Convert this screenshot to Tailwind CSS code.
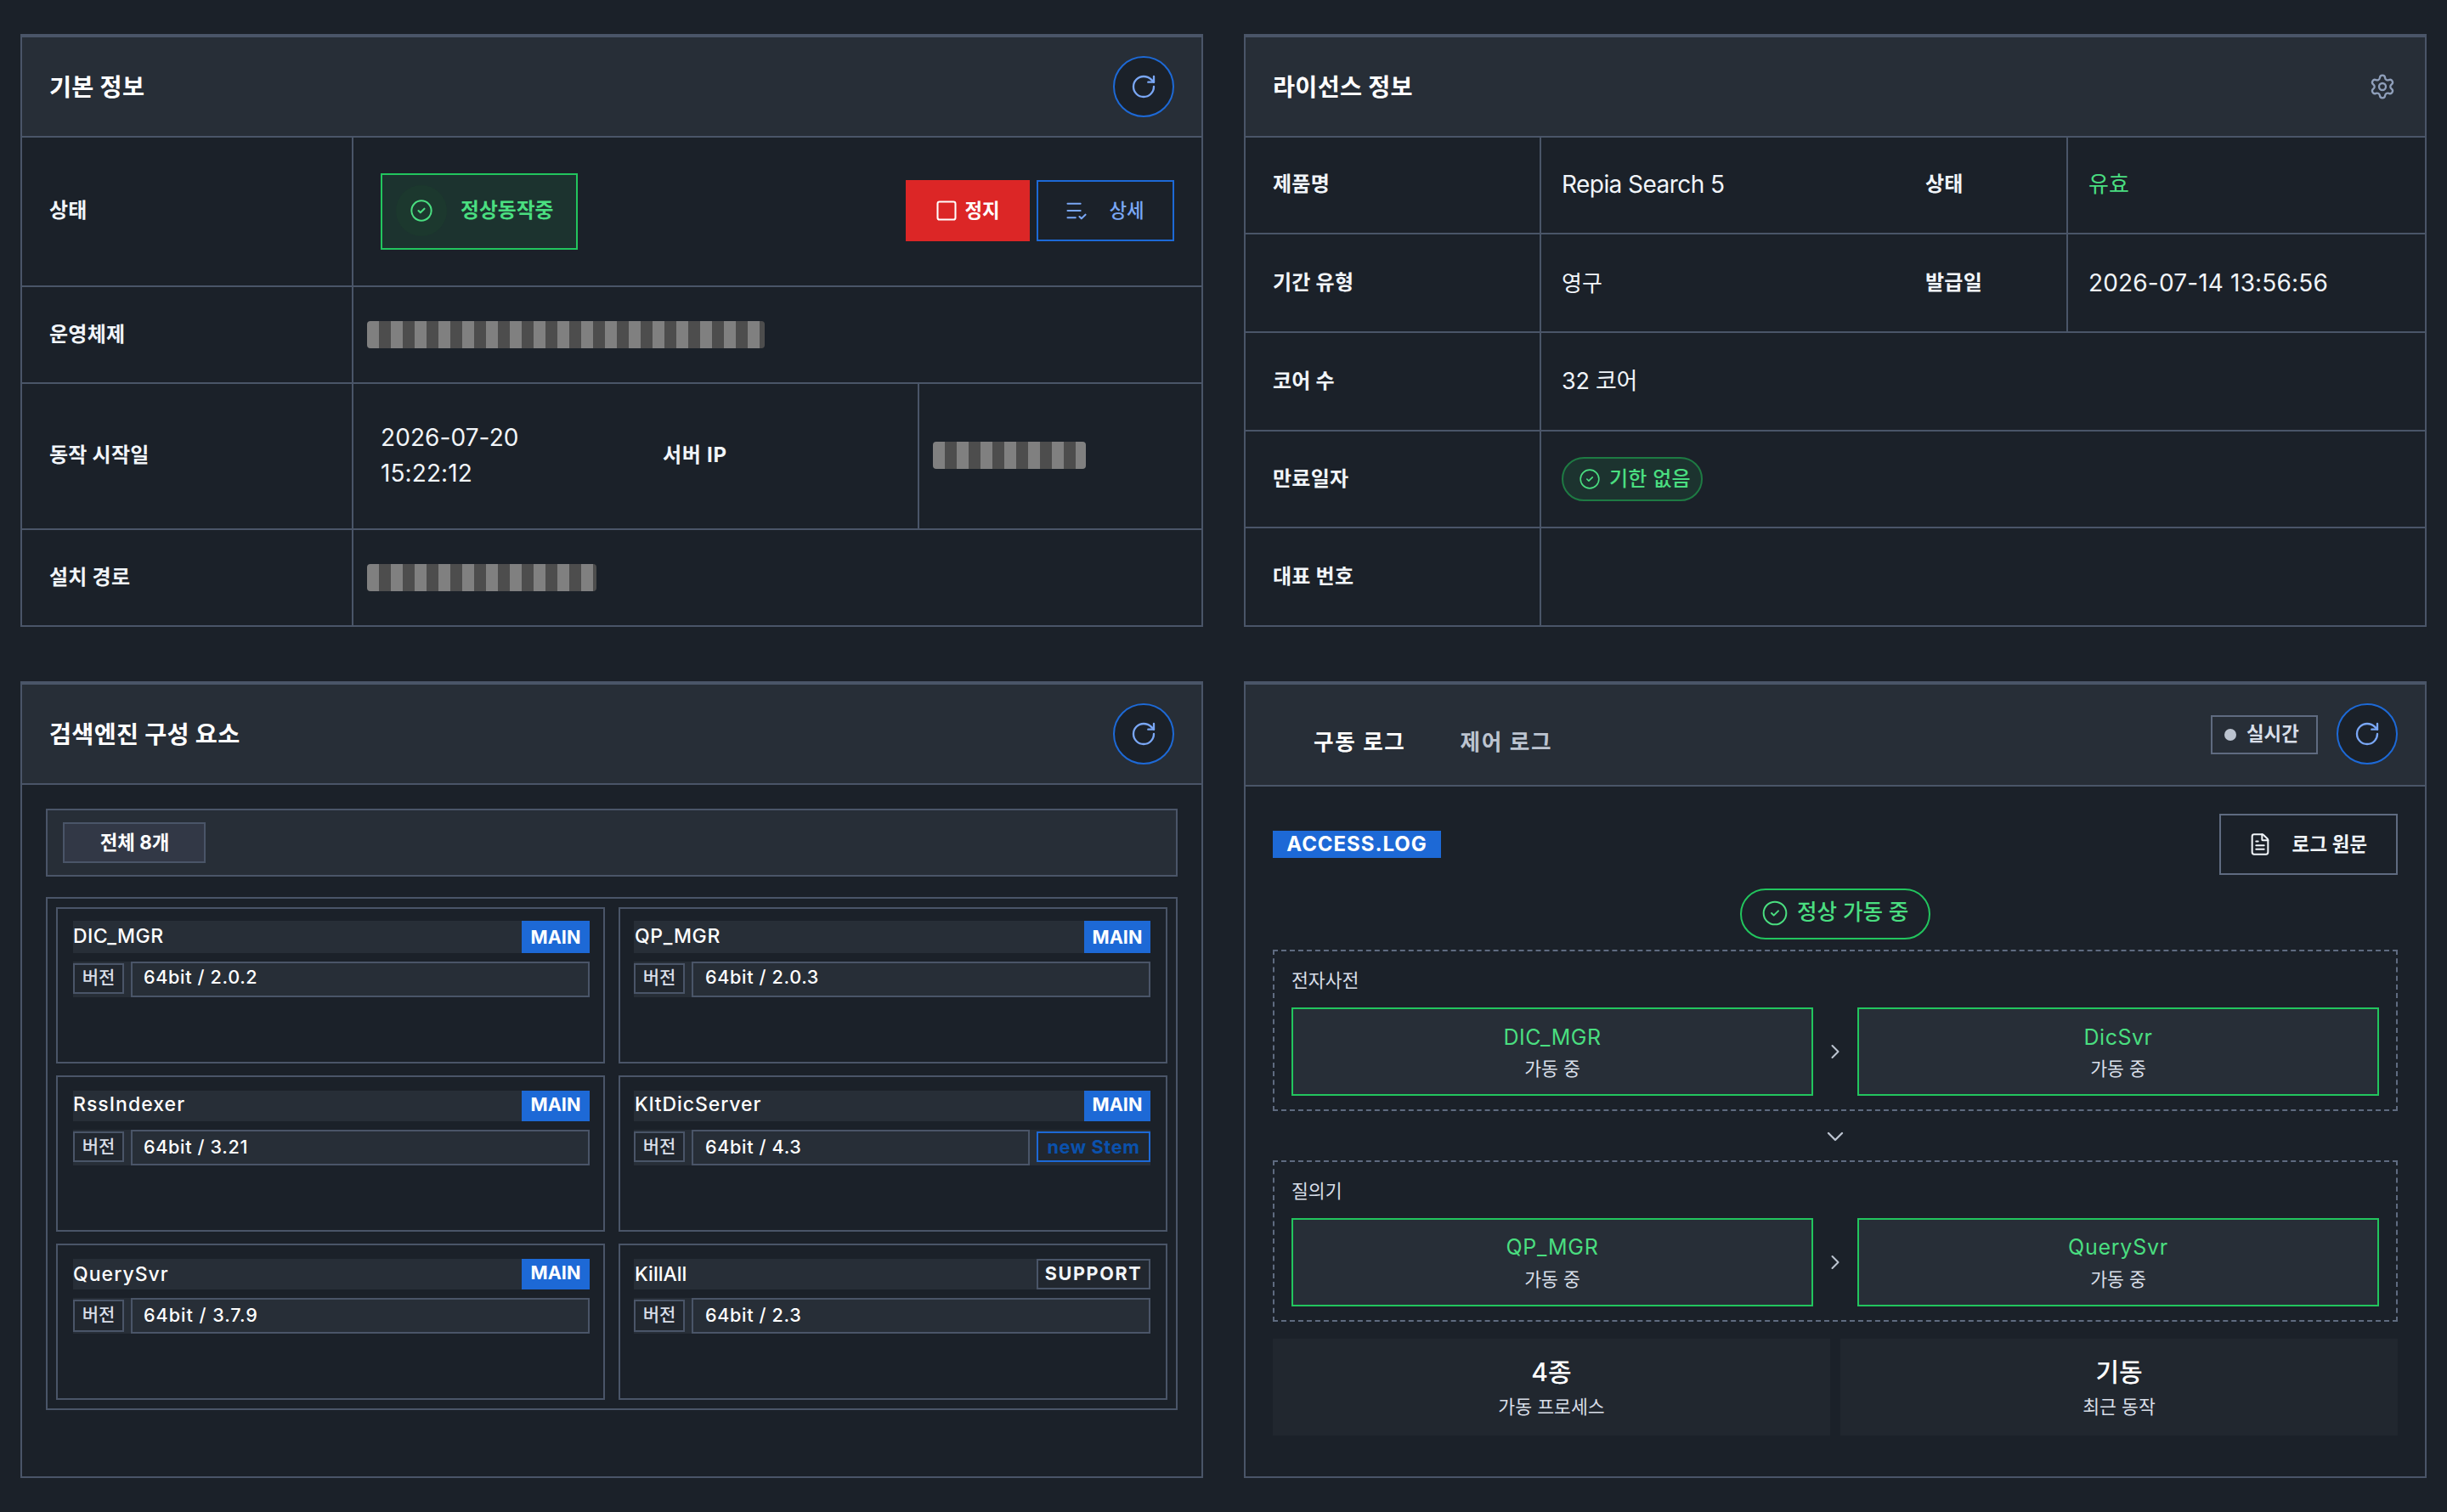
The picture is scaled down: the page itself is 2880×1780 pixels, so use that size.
<!DOCTYPE html>
<html lang="ko">
<head>
    <meta charset="UTF-8">
    <meta name="viewport" content="width=device-width, initial-scale=1.0">
    <title>검색엔진 관리</title>
    <script src="https://cdn.jsdelivr.net/npm/@tailwindcss/browser@4"></script>
</head>
<body class="h-[1780px] overflow-hidden bg-[#1b2129] font-['Inter','Noto_Sans_CJK_KR',sans-serif] text-[#f1f5f9]">
    <!-- Shared icons -->
    <svg class="hidden">
        <symbol id="i-refresh" viewBox="0 0 24 24"><path d="M21 12a9 9 0 1 1-9-9c2.52 0 4.93 1 6.74 2.74L21 8"/><path d="M21 3v5h-5"/></symbol>
        <symbol id="i-check" viewBox="0 0 24 24"><circle cx="12" cy="12" r="10"/><path d="m9 12 2 2 4-4"/></symbol>
        <symbol id="i-right" viewBox="0 0 24 24"><path d="m9 18 6-6-6-6"/></symbol>
    </svg>

    <main class="grid grid-cols-2 grid-rows-[698px_938px] gap-x-12 gap-y-16 px-6 pt-10">

        <!-- Basic info -->
        <section class="flex flex-col border-2 border-t-4 border-[#4a5568]">
            <header class="flex h-[118px] items-center justify-between border-b-2 border-[#4a5568] bg-[#272e37] px-8">
                <h2 class="pt-0.5 text-[28.3px] font-bold tracking-[0.01em] text-white">기본 정보</h2>
                <button class="flex size-[72px] items-center justify-center rounded-full border-2 border-[#1d69d6] bg-[#1b2129] text-[#7aa7f5]">
                    <svg class="size-8 fill-none stroke-current stroke-[1.75]" stroke-linecap="round" stroke-linejoin="round"><use href="#i-refresh"/></svg>
                </button>
            </header>
            <div class="flex h-44 border-b-2 border-[#4a5568]">
                <div class="flex w-[390px] items-center border-r-2 border-[#4a5568] pb-0.5 pl-8 text-[24px] font-bold tracking-[0.01em]">상태</div>
                <div class="flex flex-1 items-center justify-between px-8">
                    <div class="flex h-[90px] w-[232px] items-center border-2 border-[#22c55e] bg-[#1c332f] pb-0.5 pl-4 text-[#4ade80]">
                        <span class="flex size-[60px] items-center justify-center rounded-full bg-[#1c382e]">
                            <svg class="size-7 fill-none stroke-current stroke-[1.75]" stroke-linecap="round" stroke-linejoin="round"><use href="#i-check"/></svg>
                        </span>
                        <span class="ml-4 text-[23.8px] font-bold">정상동작중</span>
                    </div>
                    <div class="flex gap-2 pb-0.5">
                        <button class="flex h-[72px] w-[146px] items-center justify-center gap-[7px] bg-[#dc2626] pr-px text-[22.4px] font-bold text-white">
                            <svg class="size-7 fill-none stroke-current stroke-[1.75]" viewBox="0 0 24 24"><rect x="3" y="3" width="18" height="18" rx="2"/></svg>
                            정지
                        </button>
                        <button class="flex h-[72px] w-[162px] items-center justify-center gap-6 border-2 border-[#1d69d6] pr-0.5 text-[22.4px] font-medium text-[#7aa7f5]">
                            <svg class="size-7 fill-none stroke-current stroke-[1.75]" viewBox="0 0 24 24" stroke-linecap="round" stroke-linejoin="round"><path d="M16 5H3M16 12H3M11 19H3m12-1 2 2 4-4"/></svg>
                            상세
                        </button>
                    </div>
                </div>
            </div>
            <div class="flex h-[114px] border-b-2 border-[#4a5568]">
                <div class="flex w-[390px] items-center border-r-2 border-[#4a5568] pl-8 text-[24px] font-bold tracking-[0.01em]">운영체제</div>
                <div class="flex flex-1 items-center pl-4">
                    <div class="h-8 w-[468px] rounded bg-[repeating-linear-gradient(90deg,#808080_0_14px,#4d4d4d_14px_28px)]"></div>
                </div>
            </div>
            <div class="flex h-[172px] border-b-2 border-[#4a5568]">
                <div class="flex w-[390px] items-center border-r-2 border-[#4a5568] pb-0.5 pl-8 text-[24px] font-bold tracking-[0.01em]">동작 시작일</div>
                <div class="flex w-[332px] items-center pb-[3px] pl-8 text-[28px] leading-[42px] tracking-[0.003em]">2026-07-20<br>15:22:12</div>
                <div class="flex w-[334px] items-center border-r-2 border-[#4a5568] pb-0.5 pl-8 text-[24px] font-bold tracking-[0.03em]">서버 IP</div>
                <div class="flex flex-1 items-center pb-0.5 pl-4">
                    <div class="h-8 w-[180px] rounded bg-[repeating-linear-gradient(90deg,#808080_0_14px,#4d4d4d_14px_28px)]"></div>
                </div>
            </div>
            <div class="flex flex-1">
                <div class="flex w-[390px] items-center border-r-2 border-[#4a5568] pl-8 text-[24px] font-bold tracking-[0.01em]">설치 경로</div>
                <div class="flex flex-1 items-center pl-4">
                    <div class="h-8 w-[270px] rounded bg-[repeating-linear-gradient(90deg,#808080_0_14px,#4d4d4d_14px_28px)]"></div>
                </div>
            </div>
        </section>

        <!-- License info -->
        <section class="flex flex-col border-2 border-t-4 border-[#4a5568]">
            <header class="flex h-[118px] items-center justify-between border-b-2 border-[#4a5568] bg-[#272e37] pr-[34px] pl-8">
                <h2 class="pt-0.5 text-[28.3px] font-bold tracking-[0.01em] text-white">라이선스 정보</h2>
                <svg class="size-8 fill-none stroke-[#8f9fba] stroke-[1.75]" viewBox="0 0 24 24" stroke-linecap="round" stroke-linejoin="round"><path d="M9.671 4.136a2.34 2.34 0 0 1 4.659 0 2.34 2.34 0 0 0 3.319 1.915 2.34 2.34 0 0 1 2.33 4.033 2.34 2.34 0 0 0 0 3.831 2.34 2.34 0 0 1-2.33 4.033 2.34 2.34 0 0 0-3.319 1.915 2.34 2.34 0 0 1-4.659 0 2.34 2.34 0 0 0-3.32-1.915 2.34 2.34 0 0 1-2.33-4.033 2.34 2.34 0 0 0 0-3.831A2.34 2.34 0 0 1 6.35 6.051a2.34 2.34 0 0 0 3.319-1.915"/><circle cx="12" cy="12" r="3"/></svg>
            </header>
            <div class="flex h-[114px] border-b-2 border-[#4a5568]">
                <div class="flex w-[348px] items-center border-r-2 border-[#4a5568] pb-0.5 pl-8 text-[24px] font-bold tracking-[0.01em]">제품명</div>
                <div class="flex w-[420px] items-center pb-[3px] pl-6 text-[28px] tracking-[-0.02em]">Repia Search 5</div>
                <div class="flex w-[200px] items-center border-r-2 border-[#4a5568] pb-0.5 pl-8 text-[24px] font-bold tracking-[0.01em]">상태</div>
                <div class="flex flex-1 items-center pb-[3px] pl-6 text-[26px] text-[#4ade80]">유효</div>
            </div>
            <div class="flex h-[116px] border-b-2 border-[#4a5568]">
                <div class="flex w-[348px] items-center border-r-2 border-[#4a5568] pl-8 text-[24px] font-bold tracking-[0.01em]">기간 유형</div>
                <div class="flex w-[420px] items-center pl-6 text-[26px]">영구</div>
                <div class="flex w-[200px] items-center border-r-2 border-[#4a5568] pl-8 text-[24px] font-bold tracking-[0.01em]">발급일</div>
                <div class="flex flex-1 items-center pl-6 text-[28px] tracking-[0.006em]">2026-07-14 13:56:56</div>
            </div>
            <div class="flex h-[116px] border-b-2 border-[#4a5568]">
                <div class="flex w-[348px] items-center border-r-2 border-[#4a5568] pl-8 text-[24px] font-bold tracking-[0.01em]">코어 수</div>
                <div class="flex items-center pl-6 text-[27px] tracking-[-0.01em]">32 코어</div>
            </div>
            <div class="flex h-[114px] border-b-2 border-[#4a5568]">
                <div class="flex w-[348px] items-center border-r-2 border-[#4a5568] pl-8 text-[24px] font-bold tracking-[0.01em]">만료일자</div>
                <div class="flex items-center pl-6">
                    <span class="flex h-[52px] w-[166px] items-center gap-2.5 rounded-full border-2 border-[#1e7a43] bg-[#1c332f] pl-[18px] text-[24px] font-medium tracking-[0.01em] text-[#4ade80]">
                        <svg class="size-[26px] fill-none stroke-current stroke-[1.5]" stroke-linecap="round" stroke-linejoin="round"><use href="#i-check"/></svg>
                        기한 없음
                    </span>
                </div>
            </div>
            <div class="flex flex-1">
                <div class="flex w-[348px] items-center border-r-2 border-[#4a5568] pl-8 text-[24px] font-bold tracking-[0.01em]">대표 번호</div>
            </div>
        </section>

        <!-- Engine components -->
        <section class="flex flex-col border-2 border-t-4 border-[#4a5568]">
            <header class="flex h-[118px] items-center justify-between border-b-2 border-[#4a5568] bg-[#272e37] px-8">
                <h2 class="pt-0.5 text-[28.3px] font-bold tracking-[0.01em] text-white">검색엔진 구성 요소</h2>
                <button class="flex size-[72px] items-center justify-center rounded-full border-2 border-[#1d69d6] bg-[#1b2129] text-[#7aa7f5]">
                    <svg class="size-8 fill-none stroke-current stroke-[1.75]" stroke-linecap="round" stroke-linejoin="round"><use href="#i-refresh"/></svg>
                </button>
            </header>
            <div class="px-7 pt-7">
                <div class="flex h-20 items-center border-2 border-[#4a5568] bg-[#272e37] pl-[18px]">
                    <span class="flex h-12 w-[168px] items-center justify-center border-2 border-[#4a5568] bg-[#323846] pl-px text-[22.4px] font-bold text-white">전체 8개</span>
                </div>
                <div class="mt-6 grid grid-cols-2 gap-x-4 gap-y-3.5 border-2 border-[#4a5568] p-2.5">
                    <div class="h-[184px] border-2 border-[#4a5568] pt-3.5 pr-4 pl-[18px]">
                        <div class="flex h-[38px] items-center justify-between bg-[#272e37]">
                            <span class="pb-px text-[23px] font-medium tracking-[0.02em] text-white">DIC_MGR</span>
                            <span class="flex h-full w-20 items-center justify-center bg-[#1d69d6] text-[21.6px] font-bold text-white">MAIN</span>
                        </div>
                        <div class="mt-2.5 flex h-[42px] gap-2 bg-[#272e37]">
                            <span class="mt-0.5 flex h-9 w-[60px] items-center justify-center border-2 border-[#4a5568] bg-[#21272f] pb-0.5 text-[21px] font-medium text-[#d8dee8]">버전</span>
                            <span class="flex-1 border-2 border-[#4a5568] pl-[13px] text-[21.6px] leading-8 font-medium tracking-[0.03em] text-white">64bit / 2.0.2</span>
                        </div>
                    </div>
                    <div class="h-[184px] border-2 border-[#4a5568] px-4 pt-3.5 pr-[18px]">
                        <div class="flex h-[38px] items-center justify-between bg-[#272e37]">
                            <span class="pb-px pl-px text-[23px] font-medium tracking-[0.03em] text-white">QP_MGR</span>
                            <span class="flex h-full w-[78px] items-center justify-center bg-[#1d69d6] text-[21.6px] font-bold text-white">MAIN</span>
                        </div>
                        <div class="mt-2.5 flex h-[42px] gap-2 bg-[#272e37]">
                            <span class="mt-0.5 flex h-9 w-[60px] items-center justify-center border-2 border-[#4a5568] bg-[#21272f] pb-0.5 text-[21px] font-medium text-[#d8dee8]">버전</span>
                            <span class="flex-1 border-2 border-[#4a5568] pl-3.5 text-[21.6px] leading-8 font-medium tracking-[0.03em] text-white">64bit / 2.0.3</span>
                        </div>
                    </div>
                    <div class="h-[184px] border-2 border-[#4a5568] pt-4 pr-4 pl-[18px]">
                        <div class="flex h-9 items-center justify-between bg-[#272e37]">
                            <span class="pb-[3px] text-[23px] font-medium tracking-[0.045em] text-white">RssIndexer</span>
                            <span class="flex h-full w-20 items-center justify-center bg-[#1d69d6] pb-[3px] text-[21.6px] font-bold text-white">MAIN</span>
                        </div>
                        <div class="mt-2.5 flex h-[42px] gap-2 bg-[#272e37]">
                            <span class="mt-0.5 flex h-9 w-[60px] items-center justify-center border-2 border-[#4a5568] bg-[#21272f] text-[21px] font-medium text-[#d8dee8]">버전</span>
                            <span class="flex-1 border-2 border-[#4a5568] pl-[13px] text-[21.6px] leading-9 font-medium tracking-[0.03em] text-white">64bit / 3.21</span>
                        </div>
                    </div>
                    <div class="h-[184px] border-2 border-[#4a5568] px-4 pt-4 pr-[18px]">
                        <div class="flex h-9 items-center justify-between bg-[#272e37]">
                            <span class="pb-[3px] pl-px text-[23px] font-medium tracking-[0.04em] text-white">KltDicServer</span>
                            <span class="flex h-full w-[78px] items-center justify-center bg-[#1d69d6] pb-[3px] text-[21.6px] font-bold text-white">MAIN</span>
                        </div>
                        <div class="mt-2.5 flex h-[42px] gap-2 bg-[#272e37]">
                            <span class="mt-0.5 flex h-9 w-[60px] items-center justify-center border-2 border-[#4a5568] bg-[#21272f] text-[21px] font-medium text-[#d8dee8]">버전</span>
                            <span class="flex-1 border-2 border-[#4a5568] pl-3.5 text-[21.6px] leading-9 font-medium tracking-[0.03em] text-white">64bit / 4.3</span>
                            <span class="mt-0.5 flex h-9 w-[134px] items-center justify-center border-2 border-[#1d69d6] bg-[#21272f] text-[21.6px] font-bold tracking-[0.03em] text-[#0b51ac]">new Stem</span>
                        </div>
                    </div>
                    <div class="h-[184px] border-2 border-[#4a5568] pt-4 pr-4 pl-[18px]">
                        <div class="flex h-9 items-center justify-between bg-[#272e37]">
                            <span class="text-[23px] font-medium tracking-[0.045em] text-white">QuerySvr</span>
                            <span class="flex h-full w-20 items-center justify-center bg-[#1d69d6] pb-[3px] text-[21.6px] font-bold text-white">MAIN</span>
                        </div>
                        <div class="mt-2.5 flex h-[42px] gap-2 bg-[#272e37]">
                            <span class="mt-0.5 flex h-[38px] w-[60px] items-center justify-center border-2 border-[#4a5568] bg-[#21272f] pb-0.5 text-[21px] font-medium text-[#d8dee8]">버전</span>
                            <span class="flex-1 border-2 border-[#4a5568] pl-[13px] text-[21.6px] leading-9 font-medium tracking-[0.045em] text-white">64bit / 3.7.9</span>
                        </div>
                    </div>
                    <div class="h-[184px] border-2 border-[#4a5568] px-4 pt-4 pr-[18px]">
                        <div class="flex h-9 items-center justify-between bg-[#272e37]">
                            <span class="pl-px text-[23px] font-medium text-white">KillAll</span>
                            <span class="flex h-full w-[134px] items-center justify-center border-2 border-[#4a5568] bg-[#21272f] pb-0.5 text-[21.6px] font-bold tracking-[0.075em] text-[#f1f5f9]">SUPPORT</span>
                        </div>
                        <div class="mt-2.5 flex h-[42px] gap-2 bg-[#272e37]">
                            <span class="mt-0.5 flex h-[38px] w-[60px] items-center justify-center border-2 border-[#4a5568] bg-[#21272f] pb-0.5 text-[21px] font-medium text-[#d8dee8]">버전</span>
                            <span class="flex-1 border-2 border-[#4a5568] pl-3.5 text-[21.6px] leading-9 font-medium tracking-[0.03em] text-white">64bit / 2.3</span>
                        </div>
                    </div>
                </div>
            </div>
        </section>

        <!-- Logs -->
        <section class="flex flex-col border-2 border-t-4 border-[#4a5568]">
            <header class="flex h-[120px] items-center justify-between border-b-2 border-[#4a5568] bg-[#272e37] pr-8 pl-20">
                <nav class="flex gap-16 pt-[18px] text-[25.6px] font-bold tracking-[0.065em]">
                    <a class="text-white">구동 로그</a>
                    <a class="text-[#bcc4d0]">제어 로그</a>
                </nav>
                <div class="flex items-center gap-[22px] pb-0.5">
                    <span class="mt-0.5 flex h-[46px] w-[126px] items-center gap-3 border-2 border-[#5f6b80] pl-3.5 text-[22.4px] font-bold text-[#d8dee8]">
                        <i class="size-3.5 rounded-full bg-[#bcc4d0]"></i><span class="pb-0.5">실시간</span>
                    </span>
                    <button class="flex size-[72px] items-center justify-center rounded-full border-2 border-[#1d69d6] bg-[#1b2129] text-[#7aa7f5]">
                        <svg class="size-8 fill-none stroke-current stroke-[1.75]" stroke-linecap="round" stroke-linejoin="round"><use href="#i-refresh"/></svg>
                    </button>
                </div>
            </header>
            <div class="flex flex-col px-8 pt-8">
                <div class="flex items-center justify-between">
                    <span class="flex h-8 w-[198px] items-center justify-center bg-[#1d69d6] text-[24px] font-bold tracking-[0.04em] text-white">ACCESS.LOG</span>
                    <button class="flex h-[72px] w-[210px] items-center justify-center gap-6 border-2 border-[#5f6b80] pr-0.5 text-[22.4px] font-bold tracking-[0.01em]">
                        <svg class="size-7 fill-none stroke-current stroke-[1.75]" viewBox="0 0 24 24" stroke-linecap="round" stroke-linejoin="round"><path d="M6 22a2 2 0 0 1-2-2V4a2 2 0 0 1 2-2h8a2.4 2.4 0 0 1 1.704.706l3.588 3.588A2.4 2.4 0 0 1 20 8v12a2 2 0 0 1-2 2z"/><path d="M14 2v5a1 1 0 0 0 1 1h5M10 9H8M16 13H8M16 17H8"/></svg>
                        로그 원문
                    </button>
                </div>
                <div class="mt-4 flex h-[60px] w-56 items-center gap-2.5 self-center rounded-full border-2 border-[#22c55e] pb-[3px] pl-[23px] text-[25.6px] font-medium text-[#4ade80]">
                    <svg class="size-8 fill-none stroke-current stroke-[1.5]" stroke-linecap="round" stroke-linejoin="round"><use href="#i-check"/></svg>
                    정상 가동 중
                </div>
                <div class="mt-3 h-[190px] border-2 border-dashed border-[#5f6b80] px-5 pt-4">
                    <p class="h-[50px] text-[21.6px] leading-9 text-[#d8dee8]">전자사전</p>
                    <div class="flex items-center">
                        <div class="flex h-[104px] flex-1 flex-col items-center justify-center border-2 border-[#22c55e] bg-[#272e37] pt-[3px]">
                            <b class="text-[25px] leading-9 font-normal tracking-[0.02em] text-[#4ade80]">DIC_MGR</b>
                            <span class="mt-px text-[21.6px] leading-9 text-[#d8dee8]">가동 중</span>
                        </div>
                        <svg class="mx-3 size-7 fill-none stroke-[#bcc4d0] stroke-[1.75]" stroke-linecap="round" stroke-linejoin="round"><use href="#i-right"/></svg>
                        <div class="flex h-[104px] flex-1 flex-col items-center justify-center border-2 border-[#22c55e] bg-[#272e37] pt-[3px]">
                            <b class="text-[25px] leading-9 font-normal tracking-[0.02em] text-[#4ade80]">DicSvr</b>
                            <span class="mt-px text-[21.6px] leading-9 text-[#d8dee8]">가동 중</span>
                        </div>
                    </div>
                </div>
                <div class="flex h-[58px] items-center justify-center pt-0.5">
                    <svg class="size-8 fill-none stroke-[#bcc4d0] stroke-[1.75]" viewBox="0 0 24 24" stroke-linecap="round" stroke-linejoin="round"><path d="m6 9 6 6 6-6"/></svg>
                </div>
                <div class="h-[190px] border-2 border-dashed border-[#5f6b80] px-5 pt-4">
                    <p class="h-[50px] text-[21.6px] leading-9 text-[#d8dee8]">질의기</p>
                    <div class="flex items-center">
                        <div class="flex h-[104px] flex-1 flex-col items-center justify-center border-2 border-[#22c55e] bg-[#272e37] pt-0.5">
                            <b class="text-[25px] leading-9 font-normal tracking-[0.03em] text-[#4ade80]">QP_MGR</b>
                            <span class="mt-0.5 text-[21.6px] leading-9 text-[#d8dee8]">가동 중</span>
                        </div>
                        <svg class="mx-3 size-7 fill-none stroke-[#bcc4d0] stroke-[1.75]" stroke-linecap="round" stroke-linejoin="round"><use href="#i-right"/></svg>
                        <div class="flex h-[104px] flex-1 flex-col items-center justify-center border-2 border-[#22c55e] bg-[#272e37] pt-0.5">
                            <b class="text-[25px] leading-9 font-normal tracking-[0.03em] text-[#4ade80]">QuerySvr</b>
                            <span class="mt-0.5 text-[21.6px] leading-9 text-[#d8dee8]">가동 중</span>
                        </div>
                    </div>
                </div>
                <div class="mt-5 grid grid-cols-2 gap-3">
                    <div class="flex h-[114px] flex-col items-center justify-center bg-[#21272f]">
                        <b class="text-[30px] leading-[44px] font-medium text-white">4종</b>
                        <span class="mt-px text-[21.6px] leading-9 text-[#d8dee8]">가동 프로세스</span>
                    </div>
                    <div class="flex h-[114px] flex-col items-center justify-center bg-[#21272f]">
                        <b class="text-[30px] leading-[44px] font-medium text-white">기동</b>
                        <span class="mt-px text-[21.6px] leading-9 text-[#d8dee8]">최근 동작</span>
                    </div>
                </div>
            </div>
        </section>
    </main>
</body>
</html>
